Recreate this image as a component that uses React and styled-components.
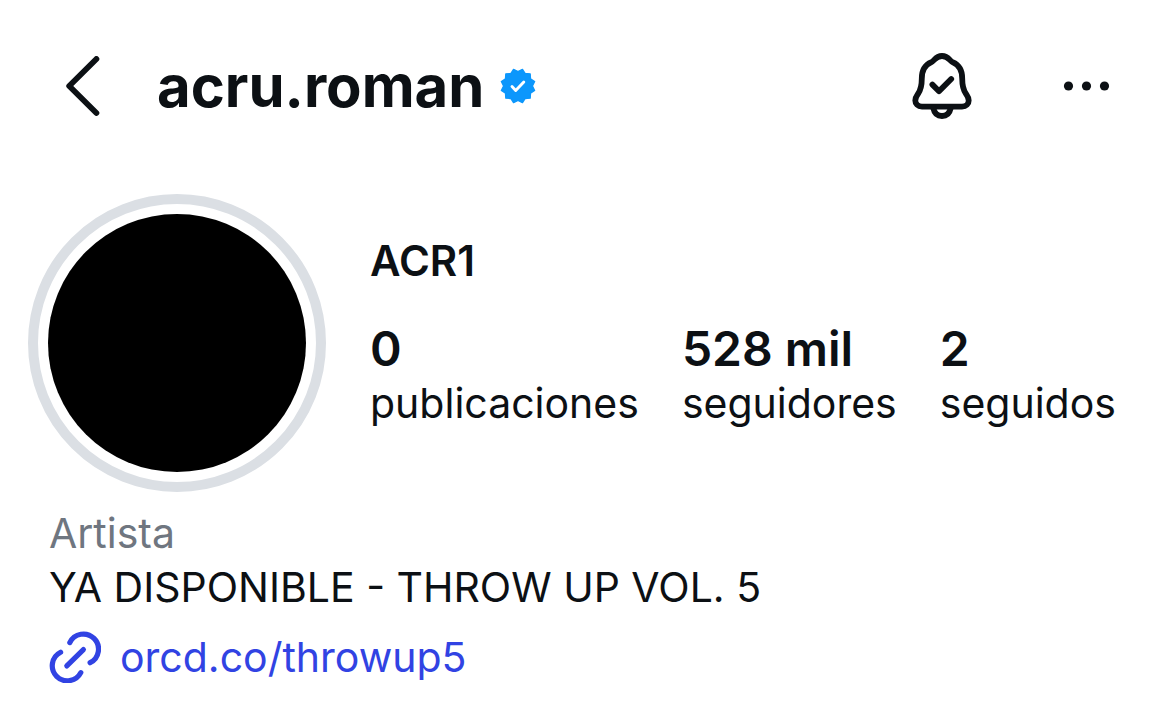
import React from "react";
import styled, { createGlobalStyle } from "styled-components";

const GlobalStyle = createGlobalStyle`
  body {
    margin: 0;
    background: #ffffff;
    color: #0c1014;
    font-family: Inter, "Liberation Sans", sans-serif;
  }
`;

const Page = styled.div`
  padding-bottom: 32px;
`;

const Header = styled.header`
  display: flex;
  align-items: center;
  height: 172px;
  padding: 0 59px 0 66px;
`;

const IconButton = styled.button`
  display: flex;
  flex: none;
  margin: 0;
  padding: 0;
  border: 0;
  background: none;
  color: inherit;
  cursor: pointer;
`;

const Identity = styled.div`
  display: flex;
  flex: 1;
  align-items: center;
  gap: 16px;
  margin-left: 57px;
`;

const Username = styled.h1`
  margin: 0;
  font-size: 58px;
  font-weight: 700;
  line-height: 72px;
`;

const Actions = styled.div`
  display: flex;
  align-items: center;
  gap: 91px;
`;

const Profile = styled.section`
  display: flex;
  align-items: flex-start;
  gap: 44px;
  padding: 22px 28px 0;
`;

const Avatar = styled.div`
  flex: none;
  box-sizing: border-box;
  width: 298px;
  height: 298px;
  padding: 10px;
  border: 10px solid #dbdfe4;
  border-radius: 50%;
`;

const AvatarImage = styled.div`
  height: 100%;
  border-radius: 50%;
  background: #000000;
`;

const Summary = styled.div`
  padding-top: 40px;
`;

const DisplayName = styled.h2`
  margin: 0 0 34px;
  font-size: 42px;
  font-weight: 600;
  line-height: 54px;
`;

const Stats = styled.ul`
  display: flex;
  gap: 43px;
  margin: 0;
  padding: 0;
  list-style: none;
`;

const StatValue = styled.div`
  font-size: 48px;
  font-weight: 600;
  line-height: 54px;
`;

const StatLabel = styled.div`
  font-size: 41px;
  line-height: 54px;
`;

const Bio = styled.section`
  padding: 14px 49px 0;
`;

const BioLine = styled.p`
  margin: 0;
  font-size: 41px;
  line-height: 54px;
  color: ${({ $muted }) => ($muted ? "#6f7680" : "inherit")};
`;

const BioLink = styled.a`
  display: inline-flex;
  align-items: center;
  gap: 19px;
  margin-top: 16px;
  font-size: 41px;
  line-height: 54px;
  color: #3143e3;
  text-decoration: none;
`;

const Stroke = styled.svg`
  flex: none;
  fill: none;
  stroke: currentColor;
  stroke-linecap: round;
  stroke-linejoin: round;
`;

const starPoints = Array.from({ length: 24 }, (_, i) => {
  const radius = i % 2 ? 14.4 : 17.2;
  const angle = ((i * 15 + 15) * Math.PI) / 180;
  return `${(radius * Math.sin(angle)).toFixed(2)},${(-radius * Math.cos(angle)).toFixed(2)}`;
}).join(" ");

const BackIcon = () => (
  <Stroke width="34" height="60" viewBox="0 0 34 60" strokeWidth="5.8" aria-hidden="true">
    <path d="M30.4 3 3.2 30l27.2 27" />
  </Stroke>
);

const VerifiedBadge = () => (
  <svg width="36" height="36" viewBox="-18 -18 36 36" role="img" aria-label="Verificado">
    <polygon points={starPoints} fill="#0c97fc" stroke="#0c97fc" strokeWidth="1.4" strokeLinejoin="round" />
    <path d="M-6 .6-2.3 4.4 5.8-4" fill="none" stroke="#fff" strokeWidth="2.9" strokeLinecap="round" strokeLinejoin="round" />
  </svg>
);

const BellIcon = () => (
  <Stroke width="60" height="66" viewBox="0 0 60 66" strokeWidth="5.8" aria-hidden="true">
    <path d="M10 53.6C5.8 53.6 3.3 50.8 3.3 47.4 3.3 44.6 4.5 43 6 40.8 8.9 36.6 9.8 32.6 9.8 25.4 9.8 17.6 13.4 11.8 19.4 9.2 22.6 7.6 23.4 3 30 3S37.4 7.6 40.6 9.2C46.6 11.8 50.2 17.6 50.2 25.4 50.2 32.6 51.1 36.6 54 40.8 55.5 43 56.7 44.6 56.7 47.4 56.7 50.8 54.2 53.6 50 53.6Z" />
    <path d="M21.4 55.4C22.4 60.4 25.6 63 30 63S37.6 60.4 38.6 55.4" />
    <path d="M20.4 31.6 27 38.2 39.2 26" />
  </Stroke>
);

const MoreIcon = () => (
  <svg width="47" height="12" viewBox="0 0 47 12" fill="currentColor" aria-hidden="true">
    <circle cx="5.5" cy="6" r="4.6" />
    <circle cx="23.5" cy="6" r="4.6" />
    <circle cx="41.5" cy="6" r="4.6" />
  </svg>
);

const LinkIcon = () => (
  <Stroke width="52" height="52" viewBox="-1 -1 52 52" strokeWidth="5.2" aria-hidden="true">
    <path d="M19.8 10.6A15.1 15.1 0 1 1 40.1 30.7" />
    <path d="M10.6 20.2A15.1 15.1 0 1 0 30.8 40.6" />
    <path d="M16.8 33.9 33.4 17.6" />
  </Stroke>
);

const stats = [
  { value: "0", label: "publicaciones" },
  { value: "528 mil", label: "seguidores" },
  { value: "2", label: "seguidos" },
];

export default function App() {
  return (
    <Page>
      <GlobalStyle />
      <Header>
        <IconButton type="button" aria-label="Volver">
          <BackIcon />
        </IconButton>
        <Identity>
          <Username>acru.roman</Username>
          <VerifiedBadge />
        </Identity>
        <Actions>
          <IconButton type="button" aria-label="Notificaciones">
            <BellIcon />
          </IconButton>
          <IconButton type="button" aria-label="Más opciones">
            <MoreIcon />
          </IconButton>
        </Actions>
      </Header>
      <main>
        <Profile>
          <Avatar>
            <AvatarImage />
          </Avatar>
          <Summary>
            <DisplayName>ACR1</DisplayName>
            <Stats>
              {stats.map(({ value, label }) => (
                <li key={label}>
                  <StatValue>{value}</StatValue>
                  <StatLabel>{label}</StatLabel>
                </li>
              ))}
            </Stats>
          </Summary>
        </Profile>
        <Bio>
          <BioLine $muted>Artista</BioLine>
          <BioLine>YA DISPONIBLE - THROW UP VOL. 5</BioLine>
          <BioLink href="https://orcd.co/throwup5">
            <LinkIcon />
            orcd.co/throwup5
          </BioLink>
        </Bio>
      </main>
    </Page>
  );
}
